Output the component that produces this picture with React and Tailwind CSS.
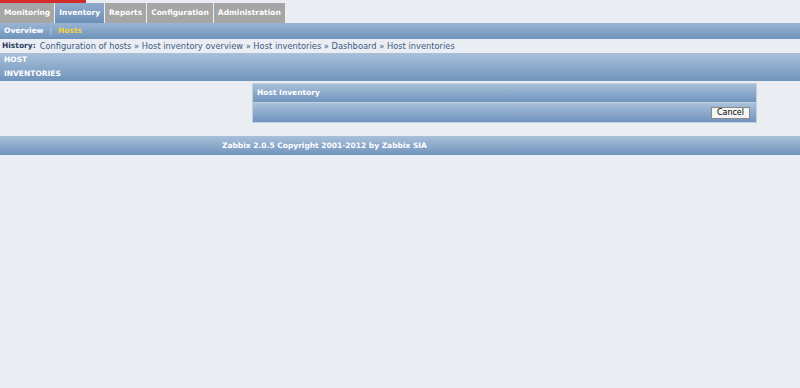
export default function App() {
  const font = { fontFamily: '"DejaVu Sans", Verdana, sans-serif' };
  const tabs = ["Monitoring", "Inventory", "Reports", "Configuration", "Administration"];
  return (
    <div className="w-[800px] h-[388px] bg-[#eaeef2] overflow-hidden" style={font}>
      <div className="h-[3px] w-[86px] bg-[#d32a2a]" />
      <div className="flex h-[20px]">
        {tabs.map((t) => (
          <div
            key={t}
            className={`flex items-center px-[4px] mr-[1px] text-[7.5px] font-bold text-white ${
              t === "Inventory" ? "bg-gradient-to-b from-[#8fabcc] to-[#6e90b8]" : "bg-[#a6a6a6]"
            }`}
          >
            {t}
          </div>
        ))}
      </div>
      <div className="h-[16px] flex items-center px-[4px] text-[7.5px] font-bold bg-gradient-to-b from-[#9ab5d3] to-[#6f93bb]">
        <span className="text-white">Overview</span>
        <span className="text-[#c9d7e6] mx-[6px] font-normal">|</span>
        <span className="text-[#f2d23c]">Hosts</span>
      </div>
      <div className="h-[14px] flex items-center px-[2px] text-[8.3px] text-[#3d5a85]">
        <span className="font-bold text-[#2a3f66] mr-[4px] text-[7.5px]">History:</span>
        <span>Configuration of hosts » Host inventory overview » Host inventories » Dashboard » Host inventories</span>
      </div>
      <div className="h-[28px] bg-gradient-to-b from-[#a9c0d9] to-[#7094bd] text-white text-[7.5px] font-bold px-[4px] leading-[14px]">
        <div>HOST</div>
        <div>INVENTORIES</div>
      </div>
      <div className="flex pl-[252px] pt-[2px]">
        <div className="w-[505px] border border-[#c3cfdc] bg-[#c3cfdc]">
          <div className="h-[18px] flex items-center px-[4px] text-[7.5px] font-bold text-white bg-gradient-to-b from-[#a9c0d9] to-[#7094bd]">
            Host Inventory
          </div>
          <div className="h-[19px] mt-[1px] flex items-center justify-end px-[6px] bg-gradient-to-b from-[#a9c0d9] to-[#7094bd]">
            <button className="h-[12px] px-[5px] text-[8px] leading-none text-black bg-[#f4f4f4] border border-[#8a8a8a]">
              Cancel
            </button>
          </div>
        </div>
      </div>
      <div className="mt-[13px] h-[19px] flex items-center pl-[222px] text-[7.5px] font-bold text-white bg-gradient-to-b from-[#a9c0d9] to-[#7094bd]">
        Zabbix 2.0.5 Copyright 2001-2012 by Zabbix SIA
      </div>
    </div>
  );
}
